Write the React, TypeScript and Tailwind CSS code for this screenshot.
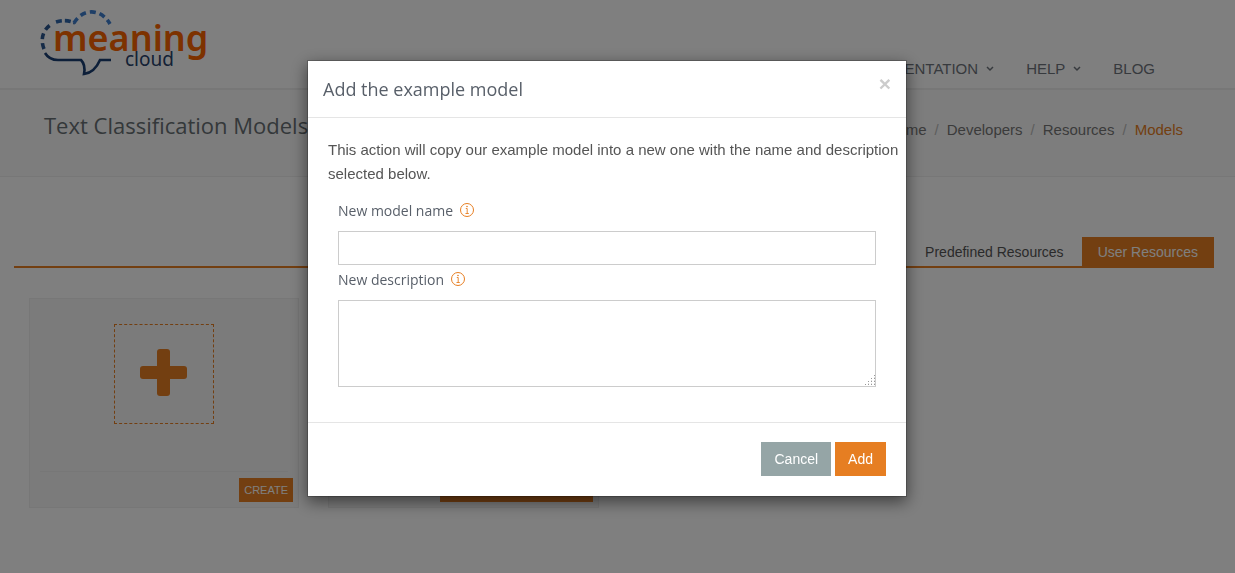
import { useState } from "react";

const navItems = [
  { label: "DOCUMENTATION", menu: true },
  { label: "HELP", menu: true },
  { label: "BLOG", menu: false },
];

const crumbs = ["Home", "Developers", "Resources"];

const Logo = () => (
  <svg width="176" height="70" viewBox="0 0 176 70" role="img" aria-label="MeaningCloud">
    <g fill="none" strokeWidth="3.6">
      <path d="M4 40C0 30 3 20 12 15" stroke="#2b568f" strokeDasharray="6 4" />
      <path d="M16 13C22 11 28 11 35 14" stroke="#2f66ab" strokeDasharray="6 3" />
      <path d="M34 14C42 0 60 -2 70 15" stroke="#3f7fcf" strokeDasharray="6 4" />
      <path d="M5 44C8 49 12 51 18 51H41C45 55 45 60 44 65C52 64 57 58 60 51H71" stroke="#1b3f73" strokeWidth="2.6" />
    </g>
    <text x="13" y="42" fontSize="36" fontWeight="600" fill="#fb6400" fontFamily="Noto Sans, sans-serif">
      meaning
    </text>
    <text x="85" y="57" fontSize="19" fill="#28426b" fontFamily="Noto Sans, sans-serif">
      cloud
    </text>
  </svg>
);

const Caret = () => (
  <svg width="8" height="6" viewBox="0 0 8 6" fill="none" stroke="currentColor" strokeWidth="1.5">
    <path d="M1 1L4 4L7 1" />
  </svg>
);

const Info = () => (
  <svg width="14" height="14" viewBox="0 0 14 14" fill="none" stroke="#e67e22" className="mb-0.5">
    <circle cx="7" cy="7" r="6.5" strokeWidth="1" />
    <path d="M5.8 5.5H7.2V10.5M5.5 10.5H8.8" strokeWidth="0.9" />
    <circle cx="7" cy="3.5" r="0.8" fill="#e67e22" stroke="none" />
  </svg>
);

const Plus = () => (
  <svg width="47" height="47" viewBox="0 0 47 47" fill="#e67e22">
    <rect x="17" width="13" height="47" rx="3" />
    <rect y="17" width="47" height="13" rx="3" />
  </svg>
);

const Header = () => (
  <header className="flex h-[90px] items-start justify-between border-b-2 border-[#eee] pl-10 pr-20">
    <a href="#" className="pt-[9px]">
      <Logo />
    </a>
    <nav className="flex gap-8 pt-[57px] text-[15px] leading-6 text-[#6f747c]">
      {navItems.map((item) => (
        <a key={item.label} href="#" className="flex items-center gap-2">
          {item.label}
          {item.menu && <Caret />}
        </a>
      ))}
    </nav>
  </header>
);

const TitleBar = () => (
  <div className="flex h-[87px] justify-between border-b border-[#eee] bg-[#fbfbfb] pl-11 pr-[52px]">
    <h1 className="pt-[19px] font-['Open_Sans',sans-serif] text-[22px] leading-8 text-[#687074]">
      Text Classification Models
    </h1>
    <ol className="flex pt-7 text-[15px] leading-6 text-[#777]">
      {crumbs.map((crumb) => (
        <li key={crumb}>
          <a href="#">{crumb}</a>
          <span className="px-2 text-[#bbb]">/</span>
        </li>
      ))}
      <li className="text-[#e67e22]">Models</li>
    </ol>
  </div>
);

const ModelCards = () => (
  <div className="flex gap-[29px] pl-[15px] pt-[30px]">
    <div className="flex h-[210px] w-[270px] flex-col border border-[#eee] bg-[#f7f7f7] px-[5px] pb-[5px]">
      <div className="mx-auto mt-[25px] flex size-[100px] items-center justify-center border border-dashed border-[#e67e22] pb-1 pr-0.5">
        <Plus />
      </div>
      <div className="mx-[5px] mt-auto border-t border-[#eee]"></div>
      <button className="ml-auto mt-[6px] h-6 bg-[#e67e22] px-[5px] text-[11px] text-white">CREATE</button>
    </div>
    <div className="flex h-[210px] w-[271px] flex-col border border-[#eee] bg-[#f7f7f7] px-[5px] pb-[5px]">
      <div className="mx-[5px] mt-auto border-t border-[#eee]"></div>
      <button className="ml-auto mt-[6px] h-6 w-[153px] bg-[#e67e22] text-[11px] text-white">
        ADD EXAMPLE MODEL
      </button>
    </div>
  </div>
);

const AddModelDialog = () => {
  const [name, setName] = useState("");
  const [description, setDescription] = useState("");

  return (
    <div className="fixed inset-0 overflow-hidden bg-black/50 pl-2 pr-[29px] pt-[60px]">
      <div
        role="dialog"
        aria-labelledby="dialog-title"
        className="mx-auto max-w-[600px] border border-black/20 bg-white bg-clip-padding shadow-[0_5px_15px_rgba(0,0,0,0.5)]"
      >
        <div className="flex items-start justify-between border-b border-[#e5e5e5] p-[15px]">
          <h4 id="dialog-title" className="font-['Open_Sans',sans-serif] text-lg leading-[26px] text-[#585f69]">
            Add the example model
          </h4>
          <button aria-label="Close" className="text-[21px] font-bold leading-4 text-[#ccc]">
            ×
          </button>
        </div>
        <form className="pb-[35px] pt-5" onSubmit={(e) => e.preventDefault()}>
          <p className="pl-5 text-[15px] leading-6 text-[#555]">
            This action will copy our example model into a new one with the name and description selected below.
          </p>
          <div className="flex flex-col px-[30px] pt-[15px] font-['Open_Sans',sans-serif] text-sm leading-5 text-[#585f69]">
            <label htmlFor="model-name" className="flex items-center gap-[7px]">
              New model name <Info />
            </label>
            <input
              id="model-name"
              value={name}
              onChange={(e) => setName(e.target.value)}
              className="mb-[5px] mt-[10px] h-[34px] border border-[#ccc] px-3"
            />
            <label htmlFor="model-description" className="flex items-center gap-[7px]">
              New description <Info />
            </label>
            <div className="relative mt-[10px]">
              <textarea
                id="model-description"
                value={description}
                onChange={(e) => setDescription(e.target.value)}
                className="block h-[87px] w-full resize-y border border-[#ccc] px-3 py-2"
              />
              {/* dotted grip over the native one */}
              <svg
                width="12"
                height="12"
                className="pointer-events-none absolute bottom-px right-px bg-white"
                fill="none"
                stroke="#999"
                strokeDasharray="1 2"
              >
                <path d="M2 10.5H12M5 7.5H12M8 4.5H12M11 1.5H12" />
                <path d="M5 9.5H12M8 6.5H12M11 3.5H12" stroke="#ddd" />
              </svg>
            </div>
          </div>
        </form>
        <div className="flex justify-end gap-1 border-t border-[#e5e5e5] px-5 pb-5 pt-[19px] text-sm text-white">
          <button className="h-[34px] bg-[#95a5a6] px-[13px]">Cancel</button>
          <button className="h-[34px] bg-[#e67e22] px-[13px]">Add</button>
        </div>
      </div>
    </div>
  );
};

const App = () => (
  <div className="min-h-screen bg-white font-['Liberation_Sans',Arial,sans-serif]">
    <Header />
    <TitleBar />
    <main className="pl-[14px] pr-[21px] pt-[60px]">
      <div className="flex justify-end gap-0.5 border-b-2 border-[#e67e22] text-sm">
        <a href="#" className="px-4 pb-1 pt-[5px] text-[#555]">
          Predefined Resources
        </a>
        <a href="#" className="bg-[#e67e22] px-4 pb-1 pt-[5px] text-white">
          User Resources
        </a>
      </div>
      <ModelCards />
    </main>
    <AddModelDialog />
  </div>
);

export default App;
